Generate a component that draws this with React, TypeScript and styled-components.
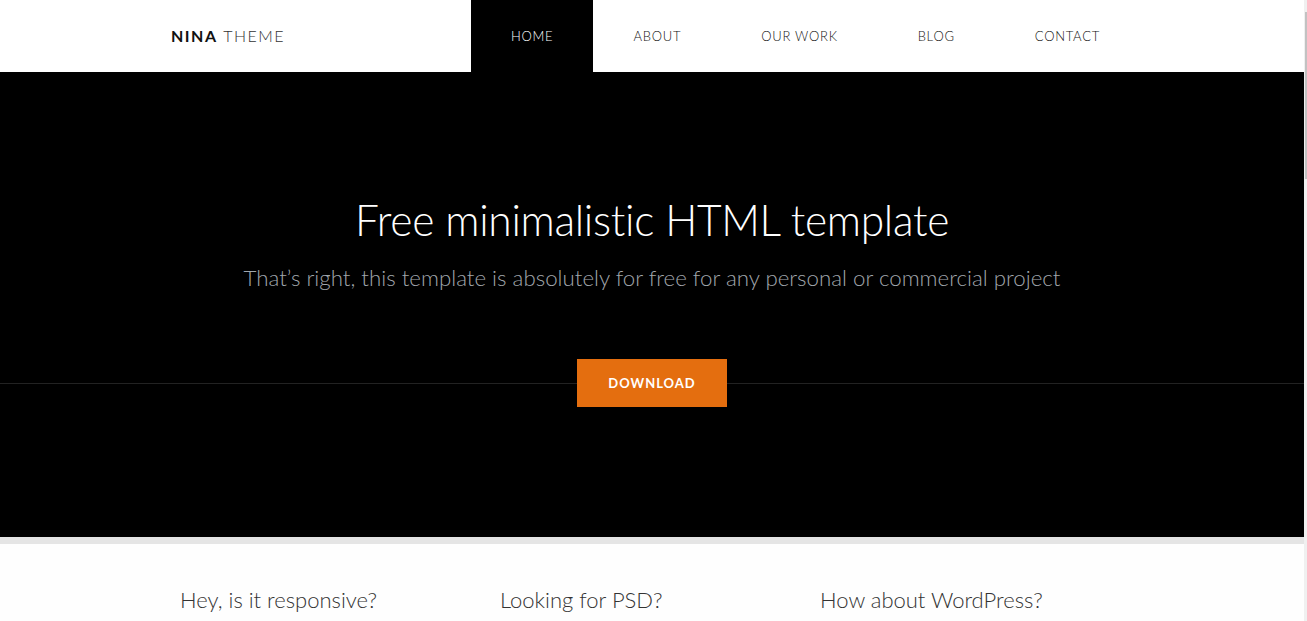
import React from "react";
import styled, { createGlobalStyle } from "styled-components";

const Global = createGlobalStyle`
  html, body { margin: 0; padding: 0; overflow: hidden; background: #fff; }
  body { font-family: Lato, "Open Sans", sans-serif; }
  * { box-sizing: border-box; }
`;

const Page = styled.div`
  display: flex;
  width: 1307px;
  height: 621px;
  overflow: hidden;
`;

const Main = styled.div`
  width: 1304px;
  flex: none;
  display: flex;
  flex-direction: column;
`;

const ScrollTrack = styled.div`
  width: 3px;
  flex: none;
  background: #f0f0f0;
  padding-top: 12px;
`;

const ScrollThumb = styled.div`
  width: 2px;
  height: 167px;
  margin-left: 1px;
  background: #c2c2c2;
`;

const Header = styled.header`
  height: 72px;
  background: #fff;
  flex: none;
`;

const HeaderInner = styled.div`
  height: 100%;
  width: 969px;
  margin-left: 171px;
  display: flex;
  align-items: center;
`;

const Logo = styled.div`
  font-size: 16px;
  letter-spacing: 1.5px;
  color: #222;
  white-space: nowrap;
  margin-top: -1px;
  b { font-weight: 700; color: #111; }
  span { font-weight: 300; color: #333; }
`;

const Nav = styled.nav`
  margin-left: auto;
  display: flex;
  height: 100%;
`;

const NavItem = styled.a<{ $active?: boolean }>`
  display: flex;
  align-items: center;
  padding: 0 40px;
  height: 100%;
  font-size: 13px;
  font-weight: 300;
  letter-spacing: 0.75px;
  text-transform: uppercase;
  color: ${(p) => (p.$active ? "#fff" : "#111")};
  background: ${(p) => (p.$active ? "#000" : "transparent")};
  text-decoration: none;
  white-space: nowrap;
`;

const Hero = styled.section`
  height: 465px;
  background: #000;
  flex: none;
  display: flex;
  flex-direction: column;
  align-items: center;
  padding-top: 122px;
`;

const Title = styled.h1`
  margin: 0;
  font-size: 42.5px;
  font-weight: 300;
  color: #fff;
  line-height: 52px;
  letter-spacing: -0.3px;
`;

const Subtitle = styled.p`
  margin: 17px 0 0;
  font-size: 22.3px;
  font-weight: 300;
  color: #a0a6ac;
  line-height: 30px;
`;

const ButtonRow = styled.div`
  align-self: stretch;
  margin-top: 66px;
  display: flex;
  justify-content: center;
  background: linear-gradient(#000 0, #000 24px, #222 24px, #222 25px, #000 25px);
`;

const Button = styled.a`
  width: 150px;
  height: 48px;
  display: flex;
  align-items: center;
  justify-content: center;
  background: #e46e0f;
  color: #fff;
  font-size: 13px;
  font-weight: 700;
  letter-spacing: 1px;
  text-decoration: none;
`;

const Divider = styled.div`
  height: 7px;
  background: #e5e5e5;
  flex: none;
`;

const Features = styled.section`
  background: #fefefe;
  flex: 1;
  padding-top: 41px;
  padding-left: 180px;
  display: grid;
  grid-template-columns: repeat(3, 320px);
  align-content: start;
`;

const FeatureTitle = styled.h3`
  margin: 0;
  font-size: 22px;
  font-weight: 300;
  color: #333;
  line-height: 30px;
`;

export default function App() {
  const items = ["Home", "About", "Our work", "Blog", "Contact"];
  return (
    <>
      <Global />
      <Page>
        <Main>
          <Header>
            <HeaderInner>
              <Logo>
                <b>NINA</b> <span>THEME</span>
              </Logo>
              <Nav>
                {items.map((it, i) => (
                  <NavItem key={it} href="#" $active={i === 0}>
                    {it}
                  </NavItem>
                ))}
              </Nav>
            </HeaderInner>
          </Header>
          <Hero>
            <Title>Free minimalistic HTML template</Title>
            <Subtitle>That’s right, this template is absolutely for free for any personal or commercial project</Subtitle>
            <ButtonRow>
              <Button href="#">DOWNLOAD</Button>
            </ButtonRow>
          </Hero>
          <Divider />
          <Features>
            <FeatureTitle>Hey, is it responsive?</FeatureTitle>
            <FeatureTitle>Looking for PSD?</FeatureTitle>
            <FeatureTitle>How about WordPress?</FeatureTitle>
          </Features>
        </Main>
        <ScrollTrack>
          <ScrollThumb />
        </ScrollTrack>
      </Page>
    </>
  );
}
